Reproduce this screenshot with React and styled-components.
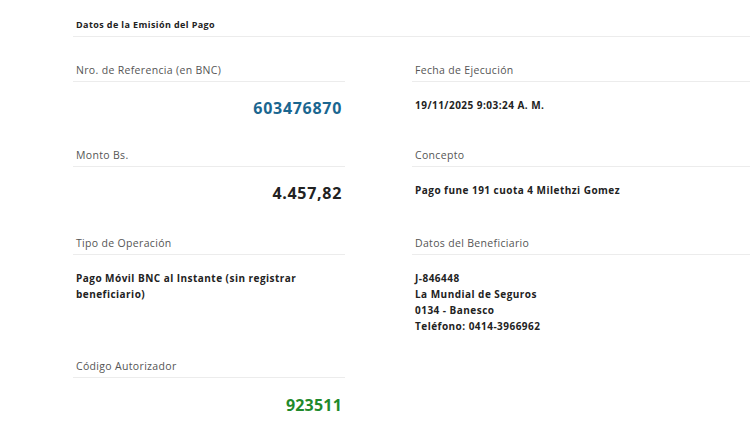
import React from "react";
import styled, { createGlobalStyle } from "styled-components";

const Global = createGlobalStyle`
  html, body { margin: 0; padding: 0; background: #ffffff; }
  body { font-family: "Open Sans", "Noto Sans", sans-serif; color: #222; overflow: hidden; }
`;

const Page = styled.div`
  width: 680px;
  margin-left: 73px;
`;

const Header = styled.div`
  padding: 18px 3px 4px;
  font-size: 9px;
  line-height: 14px;
  font-weight: 700;
  letter-spacing: 0.4px;
  color: #222;
  border-bottom: 1px solid #ececec;
  margin-bottom: 22px;
`;

const Row = styled.div`
  display: grid;
  grid-template-columns: 272px 1fr;
  column-gap: 67px;
`;

const Field = styled.div`
  display: flex;
  flex-direction: column;
`;

const Label = styled.div`
  height: 22px;
  display: flex;
  align-items: center;
  padding: 0 3px;
  font-size: 10.5px;
  letter-spacing: 0.33px;
  color: #555;
  border-bottom: 1px solid #ececec;
`;

const Body = styled.div`
  min-height: ${(p) => p.$min || 0}px;
  padding: 15px 3px 21px;
  box-sizing: border-box;
`;

const Big = styled.div`
  text-align: right;
  font-size: 16px;
  line-height: 20px;
  font-weight: 700;
  letter-spacing: ${(p) => p.$spacing ?? 0.7}px;
  padding-top: ${(p) => p.$top ?? 1}px;
  color: ${(p) => p.$color || "#222"};
`;

const Text = styled.div`
  font-size: 10px;
  line-height: 16px;
  font-weight: 700;
  letter-spacing: 0.47px;
  color: #222;
`;

export default function App() {
  return (
    <>
      <Global />
      <Page>
        <Header>Datos de la Emisión del Pago</Header>
        <Row>
          <Field>
            <Label>Nro. de Referencia (en BNC)</Label>
            <Body $min={62}>
              <Big $color="#1a6690">603476870</Big>
            </Body>
          </Field>
          <Field>
            <Label>Fecha de Ejecución</Label>
            <Body $min={62}>
              <Text>19/11/2025 9:03:24 A. M.</Text>
            </Body>
          </Field>
        </Row>
        <Row>
          <Field>
            <Label>Monto Bs.</Label>
            <Body $min={65}>
              <Big>4.457,82</Big>
            </Body>
          </Field>
          <Field>
            <Label>Concepto</Label>
            <Body $min={65}>
              <Text>Pago fune 191 cuota 4 Milethzi Gomez</Text>
            </Body>
          </Field>
        </Row>
        <Row>
          <Field>
            <Label>Tipo de Operación</Label>
            <Body>
              <Text>Pago Móvil BNC al Instante (sin registrar beneficiario)</Text>
            </Body>
          </Field>
          <Field>
            <Label>Datos del Beneficiario</Label>
            <Body>
              <Text>J-846448</Text>
              <Text>La Mundial de Seguros</Text>
              <Text>0134 - Banesco</Text>
              <Text>Teléfono: 0414-3966962</Text>
            </Body>
          </Field>
        </Row>
        <Row>
          <Field>
            <Label>Código Autorizador</Label>
            <Body>
              <Big $color="#1f8a2c" $spacing={0.2} $top={2}>923511</Big>
            </Body>
          </Field>
        </Row>
      </Page>
    </>
  );
}
